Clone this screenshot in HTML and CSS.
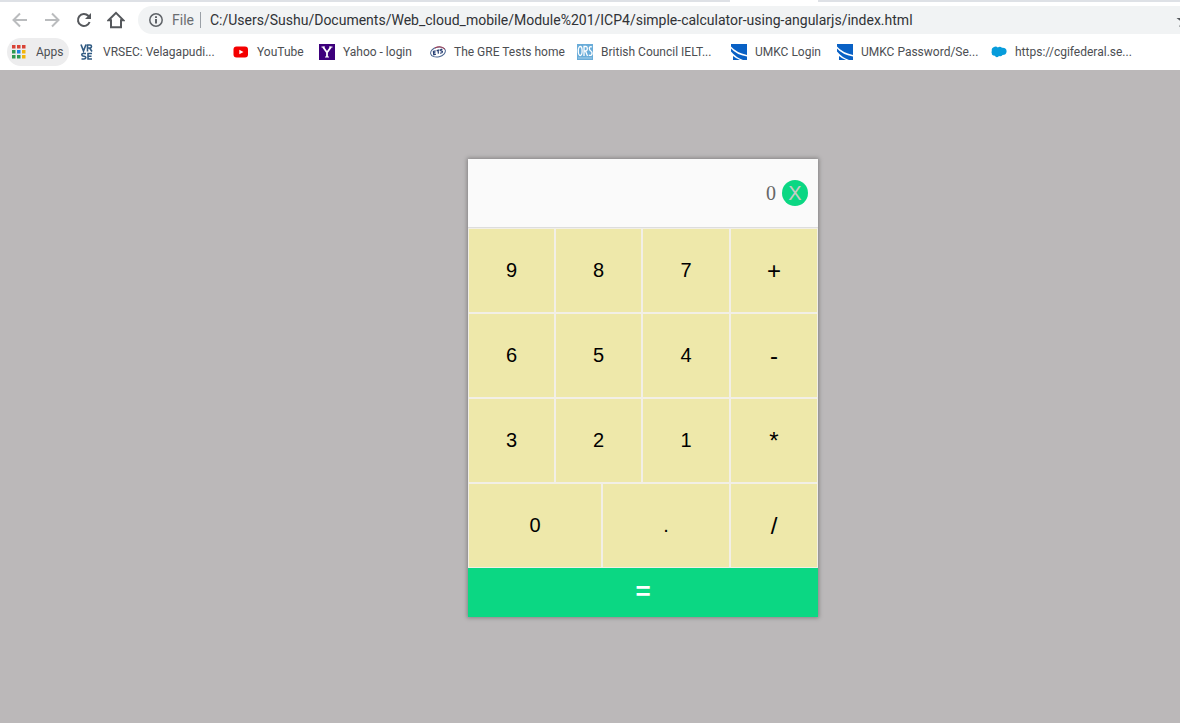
FILE: index.html
```
<!DOCTYPE html>
<html lang="en">
<head>
<meta charset="utf-8">
<title>Simple Calculator</title>
<link rel="stylesheet" href="styles.css">
</head>
<body>
<header class="browser">
  <div class="tabstrip"><span class="tab-active"></span></div>
  <div class="toolbar">
    <button class="nav muted" aria-label="Back"><svg width="16" height="16" viewBox="0 0 16 16"><path d="M15 8H2M8 1.500L1.500 8L8 14.500"/></svg></button>
    <button class="nav muted" aria-label="Forward"><svg width="16" height="16" viewBox="0 0 16 16"><path d="M1 8H14M8 1.500L14.500 8L8 14.500"/></svg></button>
    <button class="nav" aria-label="Reload"><svg width="16" height="16" viewBox="0 0 16 16"><path d="M13.600 10A6 6 0 1 1 12.300 3.800L13.500 5"/><path class="solid" d="M15 1V7H9Z"/></svg></button>
    <button class="nav" aria-label="Home"><svg width="18" height="18" viewBox="0 0 18 18"><path d="M1.500 9.300L9 1.800L16.500 9.300H14V16.200H4V9.300Z"/></svg></button>
    <div class="omnibox">
      <svg class="info" width="14" height="14" viewBox="0 0 14 14"><circle cx="7" cy="7" r="6.200"/><path d="M7 6V10.500M7 3.300V5"/></svg>
      <label class="scheme" for="url">File</label>
      <input class="url" id="url" type="text" value="C:/Users/Sushu/Documents/Web_cloud_mobile/Module%201/ICP4/simple-calculator-using-angularjs/index.html">
      <svg class="star" width="16" height="16" viewBox="0 0 16 16"><path d="M8 1L10 6H15.500L11 9.500L12.800 15L8 11.800L3.200 15L5 9.500L.5 6H6Z"/></svg>
    </div>
  </div>
  <nav class="bookmarks">
    <a class="bookmark apps" href="#"><svg width="16" height="16" viewBox="0 0 16 16"><g fill="#d94235"><path d="M0 1h3.500v3.500H0zM5 1h3.500v3.500H5zM10 1h3.500v3.500H10z"/></g><path fill="#2d9950" d="M0 6h3.500v3.500H0zM0 11h3.500v3.500H0zM5 11h3.500v3.500H5z"/><path fill="#1a82e2" d="M5 6h3.500v3.500H5z"/><path fill="#f2b50c" d="M10 6h3.500v3.500H10zM10 11h3.500v3.500H10z"/></svg>Apps</a>
    <a class="bookmark" href="#"><svg width="16" height="16" viewBox="0 0 16 16"><g fill="none" stroke="#315b83" stroke-width="1.600"><path d="M2 .5L4.500 7L7 .5M8.500 7.500V1H11Q12.500 1 12.500 2.500Q12.500 4 11 4H9M10.500 4L13 7.500M7 9.500H4Q2.800 9.500 2.800 10.800Q3 12 5 12.200Q7 12.500 6.800 13.800Q6.500 15 5 15H2.500M13 9.500H9V15H13M9 12.200H12.500"/></g></svg>VRSEC: Velagapudi...</a>
    <a class="bookmark" href="#"><svg width="16" height="16" viewBox="0 0 16 16"><rect x=".5" y="2.500" width="14.500" height="11" rx="3" fill="#f40000"/><path fill="#fff" d="M6.300 5.700L10.500 8L6.300 10.300Z"/></svg>YouTube</a>
    <a class="bookmark" href="#"><svg width="16" height="16" viewBox="0 0 16 16"><path fill="#3d007c" d="M0 0H16V16H0Z"/><path fill="none" stroke="#fff" stroke-width="1.800" d="M4 3L8 8.500L12 3M8 8V13"/><path stroke="#fff" d="M2.500 3H6M10 3H13.500M6 13H10"/></svg>Yahoo - login</a>
    <a class="bookmark" href="#"><svg width="16" height="16" viewBox="0 0 16 16"><g fill="none" transform="rotate(-14 8 8)"><ellipse cx="8" cy="8" rx="7.500" ry="4.900" stroke="#4a6590" stroke-width="1"/><path d="M6 3.300Q13 2.300 15.300 7" stroke="#a83b50" stroke-width="1"/><path d="M6 6.300H3.700L3.200 9.700H5.500M3.500 8H5.300M7 6.300H10M8.500 6.300L8 9.700M13 6.300H11.300Q10.300 7.500 12 8Q13 9 11.500 9.700H9.700" stroke="#263f73" stroke-width="1.200"/></g></svg>The GRE Tests home</a>
    <a class="bookmark" href="#"><svg width="16" height="16" viewBox="0 0 16 16"><path fill="#69acd9" d="M0 0H16V16H0Z"/><g fill="none" stroke="#fff" stroke-width="1.300"><ellipse cx="3.200" cy="7" rx="1.900" ry="4.500"/><path d="M7 12V2.500H9Q10.300 2.500 10.300 4.500Q10.300 7 8.500 7H7M8.500 7L10.500 12M15 3Q12.500 2 12.300 4.500Q12.500 6.500 14 7.200Q15.300 8 15 10Q14.500 12 11.800 11.200"/></g><path d="M1 14H15" stroke="#b5d8ed" stroke-width=".8"/></svg>British Council IELT...</a>
    <a class="bookmark" href="#"><svg width="16" height="16" viewBox="0 0 16 16"><path fill="#0961c5" d="M0 0H16V16H0Z"/><path fill="#fff" d="M0 2.500Q5 8.500 16 11V12.500Q5 10.500 0 4.500ZM0 7.500Q5 13.500 12 16H9Q5 14.500 2 12V16H0Z"/></svg>UMKC Login</a>
    <a class="bookmark" href="#"><svg width="16" height="16" viewBox="0 0 16 16"><path fill="#0961c5" d="M0 0H16V16H0Z"/><path fill="#fff" d="M0 2.500Q5 8.500 16 11V12.500Q5 10.500 0 4.500ZM0 7.500Q5 13.500 12 16H9Q5 14.500 2 12V16H0Z"/></svg>UMKC Password/Se...</a>
    <a class="bookmark" href="#"><svg width="16" height="16" viewBox="0 0 16 16"><path fill="#079cdb" d="M3 3Q5 2 6.800 3.500Q9 1.800 11 3.800Q15.600 3.500 15.600 7.500Q15.300 11 11.500 11Q10.200 13 8 12Q5.500 14.600 3.800 11.800Q.5 11.800.8 9Q0 8.500.8 7Q.2 4 3 3Z"/></svg>https://cgifederal.se...</a>
  </nav>
</header>
<main class="page">
  <form class="calculator">
    <div class="display">
      <input class="result" type="text" value="0" aria-label="Result" readonly>
      <button class="clear" type="button" aria-label="Clear">X</button>
    </div>
    <div class="row">
      <button class="key" type="button">9</button><button class="key" type="button">8</button><button class="key" type="button">7</button><button class="key op" type="button">+</button>
    </div>
    <div class="row">
      <button class="key" type="button">6</button><button class="key" type="button">5</button><button class="key" type="button">4</button><button class="key op" type="button">-</button>
    </div>
    <div class="row">
      <button class="key" type="button">3</button><button class="key" type="button">2</button><button class="key" type="button">1</button><button class="key op" type="button">*</button>
    </div>
    <div class="row last">
      <button class="key" type="button">0</button><button class="key" type="button">.</button><button class="key op" type="button">/</button>
    </div>
    <button class="equals" type="button">=</button>
  </form>
</main>
</body>
</html>
```
FILE: styles.css
```
* { box-sizing: border-box; }
body {
  margin: 0;
  min-height: 100vh;
  display: flex;
  flex-direction: column;
  background: #bbb8b9;
  font-family: Roboto, "Open Sans", sans-serif;
}
button, input { font-family: inherit; border: 0; padding: 0; }

.browser { background: #fff; overflow: hidden; }
.tabstrip { height: 2px; background: #dee1e6; padding-left: 730px; display: flex; }
.tab-active { width: 88px; background: #fff; }
.toolbar { display: flex; align-items: center; height: 36px; padding-left: 4px; }
.nav {
  width: 32px;
  height: 32px;
  flex: none;
  display: flex;
  align-items: center;
  justify-content: center;
  background: none;
}
.nav svg { fill: none; stroke: #55585c; stroke-width: 2; }
.nav .solid { fill: #55585c; stroke: none; }
.nav.muted svg { stroke: #babcbe; }
.omnibox {
  flex: 1;
  height: 28px;
  display: flex;
  align-items: center;
  margin: 0 -12px 0 6px;
  padding-left: 11px;
  border-radius: 14px 0 0 14px;
  background: #f1f3f4;
}
.omnibox svg { flex: none; }
.info { fill: none; stroke: #5f6368; stroke-width: 2; }
.info circle { stroke-width: 1.500; }
.scheme {
  margin-left: 9px;
  padding-right: 6px;
  border-right: 1px solid #9aa0a6;
  color: #6a6d71;
  font-size: 14px;
  line-height: 16px;
}
.url {
  flex: 1;
  min-width: 0;
  margin-left: 9px;
  background: none;
  color: #303236;
  font-size: 14px;
  line-height: 20px;
}
.star { fill: #55585c; }

.bookmarks {
  display: grid;
  grid-template-columns: 62px 144px 76px 101px 137px 144px 96px 144px auto;
  column-gap: 10px;
  align-items: center;
  padding: 0 0 4px 7px;
}
.bookmark {
  display: flex;
  align-items: center;
  gap: 8px;
  color: #4c4e52;
  font-size: 12px;
  line-height: 28px;
  text-decoration: none;
  white-space: nowrap;
}
.bookmark svg { flex: none; }
.apps { padding-left: 5px; border-radius: 14px; background: #ededee; }

.page {
  flex: 1;
  display: flex;
  justify-content: center;
  align-items: flex-start;
  padding: 89px 0 0 106px;
}
.calculator {
  width: 350px;
  background: #f0eee0;
  box-shadow: 0 0 4px 1px #858384;
  font-family: "Liberation Sans", Arial, sans-serif;
}
.display {
  display: flex;
  align-items: center;
  gap: 6px;
  height: 69px;
  padding: 0 10px;
  background: #fafafa;
  border-bottom: 1px solid #ddd;
}
.result {
  flex: 1;
  min-width: 0;
  background: none;
  color: #666;
  text-align: right;
  font-family: "Liberation Serif", "Times New Roman", serif;
  font-size: 20px;
}
.clear {
  width: 26px;
  height: 26px;
  border-radius: 50%;
  background: #0bd783;
  color: #c8cbc8;
  font-size: 20px;
  line-height: 26px;
}
.row { display: grid; grid-template-columns: 87fr 87fr 88fr 88fr; height: 85px; }
.row.last { grid-template-columns: 134fr 128fr 88fr; }
.key {
  border: 1px solid #f2efe6;
  background: #eee8aa;
  color: #000;
  font-size: 20px;
}
.op { font-size: 24px; }
.equals {
  display: block;
  width: 100%;
  height: 49px;
  padding-bottom: 3px;
  background: #0bd783;
  color: #fff;
  font-size: 26px;
  font-weight: bold;
}
```
